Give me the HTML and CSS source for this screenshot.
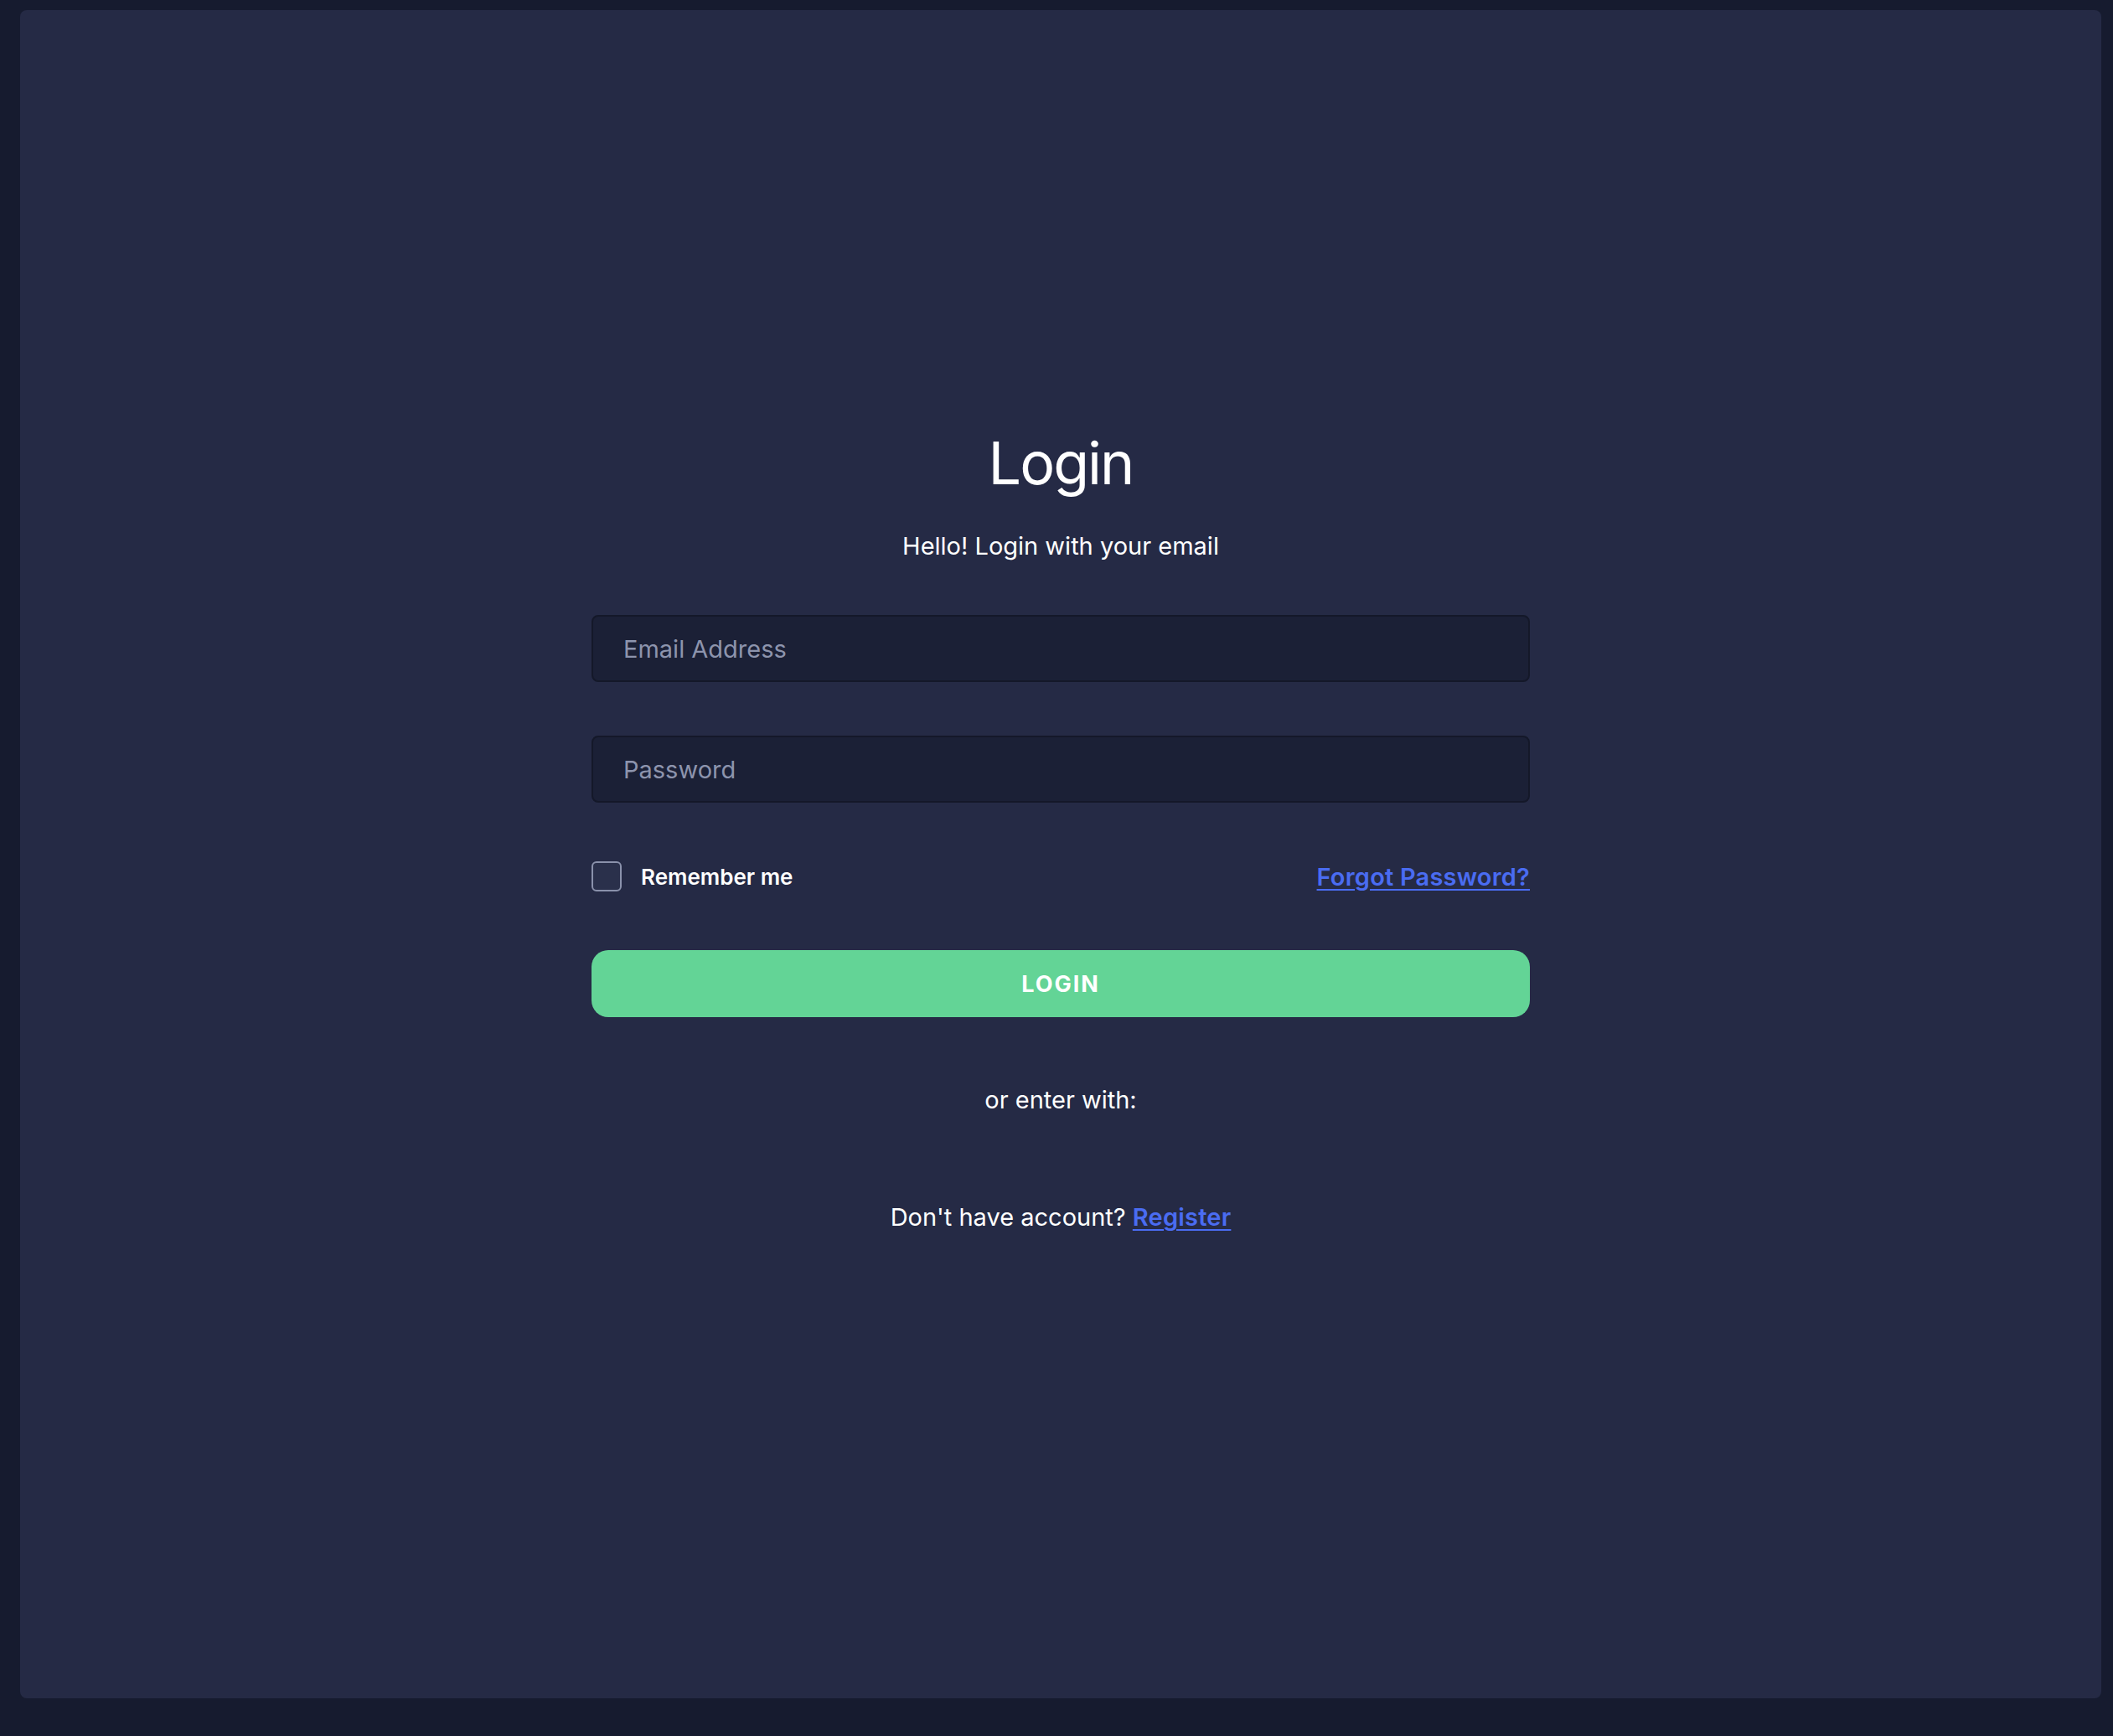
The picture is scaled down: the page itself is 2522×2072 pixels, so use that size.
FILE: index.html
```html
<!DOCTYPE html>
<html>
<head>
    <title>Login</title>
    <link rel="stylesheet" href="styles.css">
</head>
<body>
    <div class="card">
        <div class="login-box">
            <h1 class="title">Login</h1>
            <p class="subtitle">Hello! Login with your email</p>
            <input type="email" class="field field-email" placeholder="Email Address">
            <input type="password" class="field field-password" placeholder="Password">
            <div class="options">
                <label class="remember">
                    <span class="checkbox"></span>
                    <span>Remember me</span>
                </label>
                <a href="#" class="link">Forgot Password?</a>
            </div>
            <button class="login-button">LOGIN</button>
            <p class="alt">or enter with:</p>
            <p class="register">Don't have account? <a href="#" class="link">Register</a></p>
        </div>
    </div>
</body>
</html>
```
FILE: styles.css
```css
html, body {
    height: 100%;
}
body {
    margin: 0;
    padding: 12px 14px 45px 24px;
    box-sizing: border-box;
    background: #161b2f;
    font-family: Inter, "Noto Sans", sans-serif;
    color: #ffffff;
}
.card {
    height: 100%;
    background: #252a45;
    border-radius: 8px;
    display: flex;
    justify-content: center;
    padding-top: 498px;
    box-sizing: border-box;
}
.login-box {
    width: 1120px;
    display: flex;
    flex-direction: column;
    align-items: center;
}
.title {
    margin: 0;
    font-size: 70px;
    line-height: 86px;
    font-weight: 400;
    letter-spacing: -2px;
}
.subtitle {
    margin: 34px 0 0;
    font-size: 29px;
    line-height: 44px;
}
.field {
    width: 100%;
    height: 80px;
    box-sizing: border-box;
    background: #1b2036;
    border: 2px solid #141829;
    border-radius: 8px;
    padding: 0 36px;
    font-family: inherit;
    font-size: 29px;
    color: #ffffff;
    outline: none;
}
.field::placeholder {
    color: #8d94ad;
}
.field-email {
    margin-top: 60px;
}
.field-password {
    margin-top: 64px;
}
.options {
    width: 100%;
    display: flex;
    justify-content: space-between;
    align-items: center;
    margin-top: 70px;
    height: 36px;
}
.remember {
    display: flex;
    align-items: center;
    gap: 23px;
    font-size: 26px;
    font-weight: 600;
}
.checkbox {
    width: 36px;
    height: 36px;
    box-sizing: border-box;
    border: 2px solid #8a91ab;
    border-radius: 6px;
    background: #2a304b;
}
.link {
    color: #4a6cf2;
    font-size: 29px;
    font-weight: 600;
    letter-spacing: 0.2px;
    text-decoration: underline;
    text-underline-offset: 4px;
    text-decoration-thickness: 2px;
}
.login-button {
    margin-top: 70px;
    width: 100%;
    height: 80px;
    border: none;
    border-radius: 20px;
    background: #63d496;
    color: #ffffff;
    font-family: inherit;
    font-size: 27px;
    font-weight: 700;
    letter-spacing: 2px;
}
.alt {
    margin: 77px 0 0;
    font-size: 29px;
    line-height: 44px;
}
.register {
    margin: 96px 0 0;
    font-size: 29px;
    line-height: 44px;
}
```
